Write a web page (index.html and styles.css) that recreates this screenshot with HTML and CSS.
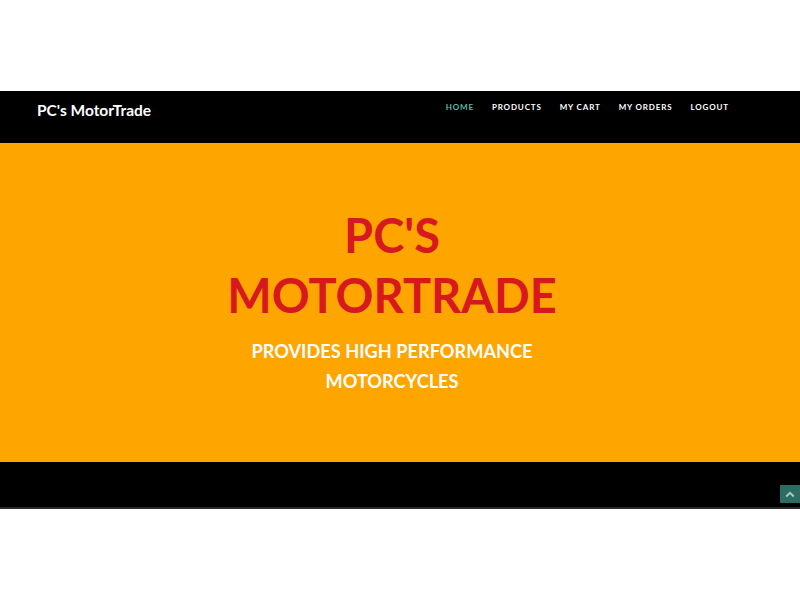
FILE: index.html
```html
<!DOCTYPE html>
<html>
<head>
<meta charset="utf-8">
<link rel="stylesheet" href="styles.css">
</head>
<body>
<div class="spacer"></div>
<header class="navbar">
  <div class="brand">PC's MotorTrade</div>
  <nav class="menu">
    <a class="active">HOME</a>
    <a>PRODUCTS</a>
    <a>MY CART</a>
    <a>MY ORDERS</a>
    <a>LOGOUT</a>
  </nav>
</header>
<section class="hero">
  <h1>PC'S<br>MOTORTRADE</h1>
  <p>PROVIDES HIGH PERFORMANCE<br>MOTORCYCLES</p>
</section>
<footer class="footer">
  <a class="totop"><svg width="10" height="7" viewBox="0 0 10 7"><path d="M1.2 5.5 L5 1.8 L8.8 5.5" fill="none" stroke="#a9c9c4" stroke-width="2"/></svg></a>
</footer>
</body>
</html>
```

FILE: styles.css
```css
* { box-sizing: border-box; }
body {
  margin: 0;
  font-family: Lato, "Open Sans", sans-serif;
  background: #fff;
}
.spacer { height: 91px; }
.navbar {
  height: 52px;
  background: #000;
  display: flex;
  justify-content: space-between;
  align-items: flex-start;
  padding: 0 71px 0 37px;
}
.brand {
  color: #fff;
  font-weight: 700;
  font-size: 15.5px;
  margin-top: 9px;
  line-height: 20px;
}
.menu {
  display: flex;
  gap: 18px;
  margin-top: 9px;
}
.menu a {
  color: #fff;
  font-weight: 700;
  font-size: 8px;
  letter-spacing: 0.85px;
  line-height: 14px;
}
.menu a.active { color: #5fb8a9; }
.hero {
  height: 319px;
  background: #ffa500;
  text-align: center;
  padding-top: 62px;
  padding-right: 16px;
}
.hero h1 {
  margin: 0;
  color: #d7191f;
  font-size: 47px;
  line-height: 60px;
  font-weight: 700;
}
.hero p {
  margin: 11px 0 0;
  color: #fff;
  font-size: 18.2px;
  line-height: 30px;
  font-weight: 700;
}
.footer {
  height: 47px;
  background: #000;
  border-bottom: 2px solid #2a2a2a;
  display: flex;
  justify-content: flex-end;
  align-items: flex-start;
}
.totop {
  margin-top: 23px;
  width: 20px;
  height: 18px;
  background: #2e6b63;
  display: flex;
  align-items: center;
  justify-content: center;
}
```
